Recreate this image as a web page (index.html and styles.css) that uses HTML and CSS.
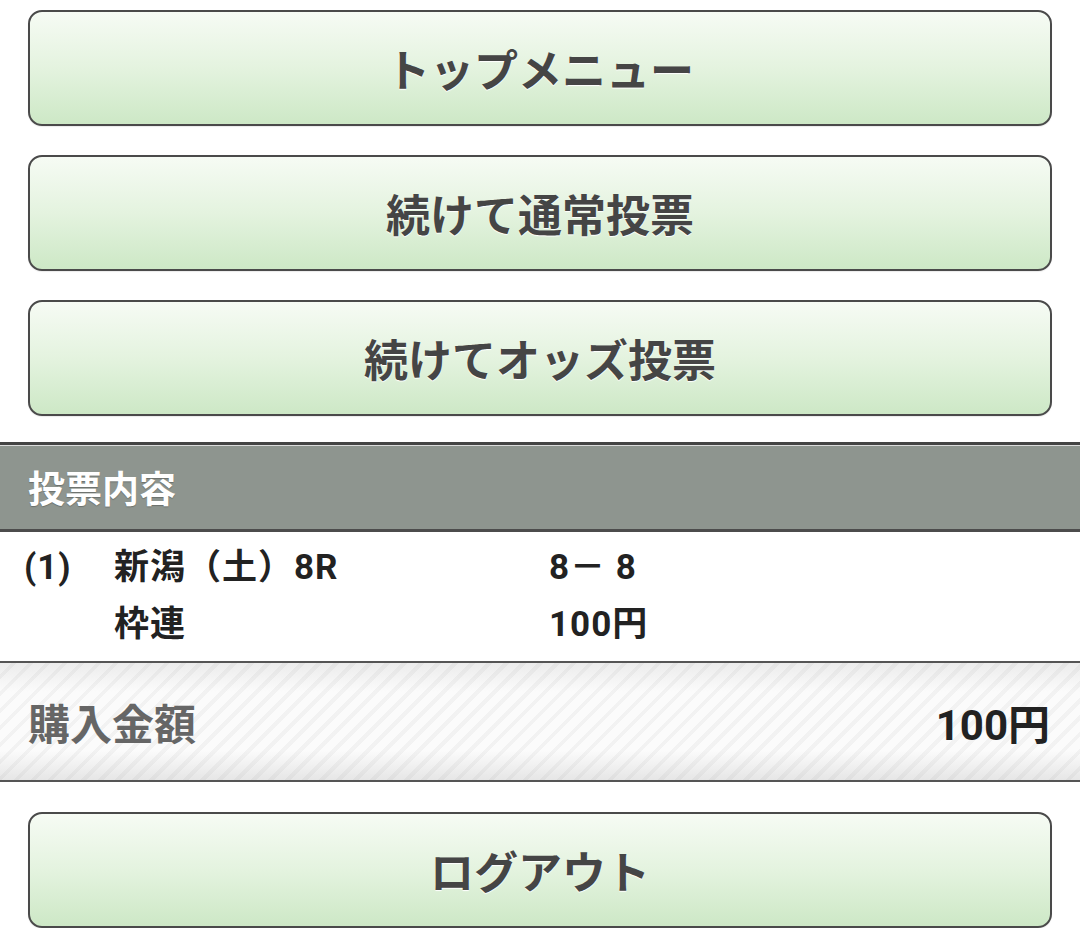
FILE: index.html
```html
<!DOCTYPE html>
<html lang="ja">
<head>
  <meta charset="UTF-8" />
  <title>投票完了</title>
  <link rel="stylesheet" href="styles.css">
</head>
<body>
  <div class="menu">
    <a class="menu-btn" href="#">トップメニュー</a>
    <a class="menu-btn" href="#">続けて通常投票</a>
    <a class="menu-btn" href="#">続けてオッズ投票</a>
  </div>

  <div class="section-head">投票内容</div>
  <div class="bet-list">
    <div class="bet">
      <div class="bet-no">(1)</div>
      <div class="bet-race">新潟（土）8R</div>
      <div class="bet-pick">8－ 8</div>
      <div></div>
      <div class="bet-type">枠連</div>
      <div class="bet-amount">100円</div>
    </div>
  </div>

  <div class="total">
    <span class="total-label">購入金額</span>
    <span class="total-value">100円</span>
  </div>

  <div class="menu menu-bottom">
    <a class="menu-btn" href="#">ログアウト</a>
  </div>
</body>
</html>
```

FILE: styles.css
```css
body {
  margin: 0;
  font-family: Roboto, "Noto Sans CJK JP", sans-serif;
  background: #fff;
  color: #222;
}
.menu {
  padding: 10px 28px 0;
  display: flex;
  flex-direction: column;
  gap: 29px;
}
.menu-btn {
  display: flex;
  align-items: center;
  justify-content: center;
  height: 112px;
  border: 2px solid #4a4a4a;
  border-radius: 14px;
  background: linear-gradient(to bottom, #f6fbf4 0%, #e4f3df 50%, #cde8c6 100%);
  box-shadow: 0 1px 1px rgba(0,0,0,0.08);
  color: #454545;
  font-family: "Noto Sans CJK JP", sans-serif;
  font-weight: bold;
  font-size: 44px;
  text-decoration: none;
  text-shadow: 0 1px 1px #fff;
}
.section-head {
  margin-top: 26px;
  height: 84px;
  border-top: 3px solid #444;
  box-shadow: inset 0 1px 0 #dcdcdc;
  border-bottom: 3px solid #4c4c4c;
  background: #8e958f;
  color: #fff;
  font-family: "Noto Sans CJK JP", sans-serif;
  font-weight: bold;
  font-size: 37px;
  display: flex;
  align-items: center;
  padding-left: 28px;
  text-shadow: 0 1px 1px rgba(0,0,0,0.25);
}
.bet-list {
  padding: 7px 0 8px;
}
.bet {
  display: grid;
  grid-template-columns: 90px 435px 1fr;
  padding-left: 24px;
  font-size: 35px;
  font-weight: bold;
  line-height: 57px;
  letter-spacing: 1px;
  color: #222;
}
.total {
  display: flex;
  justify-content: space-between;
  align-items: center;
  height: 117px;
  padding: 0 30px 0 28px;
  border-top: 2px solid #555;
  border-bottom: 2px solid #555;
  background:
    repeating-linear-gradient(135deg, rgba(0,0,0,0) 0, rgba(0,0,0,0) 8px, rgba(0,0,0,0.035) 8px, rgba(0,0,0,0.035) 12px),
    linear-gradient(to bottom, #ececec 0%, #fbfbfb 25%, #fbfbfb 75%, #e6e6e6 100%);
}
.total-label {
  font-family: "Noto Sans CJK JP", sans-serif;
  font-weight: bold;
  font-size: 42px;
  color: #666;
}
.total-value {
  font-weight: bold;
  font-size: 42px;
  color: #222;
}
.menu-bottom {
  padding-top: 30px;
}
```
